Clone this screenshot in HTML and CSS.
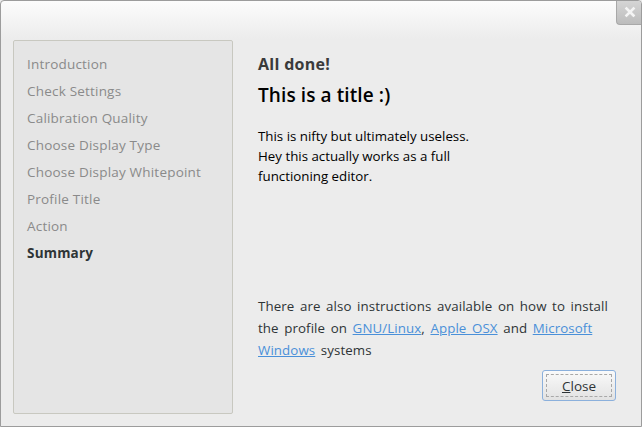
FILE: index.html
```html
<!DOCTYPE html>
<html>
<head>
<meta charset="utf-8">
<link rel="stylesheet" href="styles.css">
</head>
<body>
<div class="window">
  <div class="titlebar">
    <div class="close-x">
      <svg width="12" height="12" viewBox="0 0 12 12"><path d="M2.5 2.5 L9.5 9.5 M9.5 2.5 L2.5 9.5" stroke="#f4f4f4" stroke-width="2.6" stroke-linecap="square"/></svg>
    </div>
  </div>
  <div class="body">
    <nav class="sidebar">
      <div class="step">Introduction</div>
      <div class="step">Check Settings</div>
      <div class="step">Calibration Quality</div>
      <div class="step">Choose Display Type</div>
      <div class="step">Choose Display Whitepoint</div>
      <div class="step">Profile Title</div>
      <div class="step">Action</div>
      <div class="step current">Summary</div>
    </nav>
    <main class="content">
      <h2 class="subtitle">All done!</h2>
      <h1 class="title">This is a title :)</h1>
      <p class="desc">This is nifty but ultimately useless.<br>Hey this actually works as a full<br>functioning editor.</p>
      <div class="spacer"></div>
      <p class="note">There are also instructions available on how to install the profile on <a href="#">GNU/Linux</a>, <a href="#">Apple OSX</a> and <a href="#">Microsoft Windows</a> systems</p>
      <div class="actions">
        <button class="btn"><span class="focus"><u>C</u>lose</span></button>
      </div>
    </main>
  </div>
</div>
</body>
</html>
```

FILE: styles.css
```css
html, body {
  margin: 0;
  padding: 0;
  background: #ededed;
}
body {
  font-family: "Open Sans", "DejaVu Sans", sans-serif;
  color: #2e3436;
}
.window {
  width: 642px;
  height: 427px;
  box-sizing: border-box;
  border: 1px solid #9c9c9c;
  border-radius: 4px 4px 0 0;
  background: linear-gradient(#fcfcfc 0px, #ececec 38px, #ececec 100%);
  display: flex;
  flex-direction: column;
  overflow: hidden;
}
.titlebar {
  height: 38px;
  flex: none;
  display: flex;
  justify-content: flex-end;
  align-items: flex-start;
}
.close-x {
  width: 25px;
  height: 24px;
  margin-top: -1px;
  margin-right: -1px;
  border-left: 1px solid #a8a8a8;
  border-bottom: 1px solid #a8a8a8;
  border-bottom-left-radius: 4px;
  background: linear-gradient(#d6d6d6, #bcbcbc);
  display: flex;
  align-items: center;
  justify-content: center;
}
.body {
  flex: 1;
  display: flex;
  padding: 1px 24px 12px 12px;
  gap: 25px;
}
.sidebar {
  width: 220px;
  flex: none;
  background: #e5e5e5;
  border: 1px solid #c8c8c0;
  border-radius: 2px;
  padding: 10px 0 0 13px;
  box-sizing: border-box;
}
.step {
  font-size: 13.5px;
  line-height: 27px;
  color: #8a8a8a;
  letter-spacing: 0.2px;
}
.step.current {
  color: #2e3436;
  font-weight: bold;
}
.content {
  flex: 1;
  display: flex;
  flex-direction: column;
  padding-top: 13px;
  padding-bottom: 13px;
}
.subtitle {
  margin: 0;
  font-size: 16px;
  font-weight: bold;
  line-height: 22px;
  color: #3a3a3a;
  letter-spacing: 0.3px;
}
.title {
  margin: 8px 0 0;
  font-size: 19px;
  font-weight: 600;
  line-height: 24px;
  color: #000;
  letter-spacing: 0.1px;
}
.desc {
  margin: 19px 0 0;
  font-size: 13.3px;
  line-height: 20px;
  color: #000;
}
.spacer { flex: 1; }
.note {
  margin: 0;
  max-width: 356px;
  font-size: 13.3px;
  line-height: 22px;
  word-spacing: 2px;
  letter-spacing: 0.1px;
  color: #2e3436;
}
.note a {
  color: #4a90d9;
  text-decoration: underline;
}
.actions {
  display: flex;
  justify-content: flex-end;
  margin-top: 9px;
}
.btn {
  width: 74px;
  height: 31px;
  margin-right: 1px;
  padding: 3px;
  border: 1px solid #8bb0dc;
  border-radius: 3px;
  background: linear-gradient(#fafafa, #e2e2e2);
  font-family: inherit;
  font-size: 13.5px;
  color: #2e3436;
  box-sizing: border-box;
}
.focus {
  display: flex;
  align-items: center;
  justify-content: center;
  height: 100%;
  border: 1px dashed #a8a8a8;
  box-sizing: border-box;
}
.focus u { text-decoration: underline; }
```
